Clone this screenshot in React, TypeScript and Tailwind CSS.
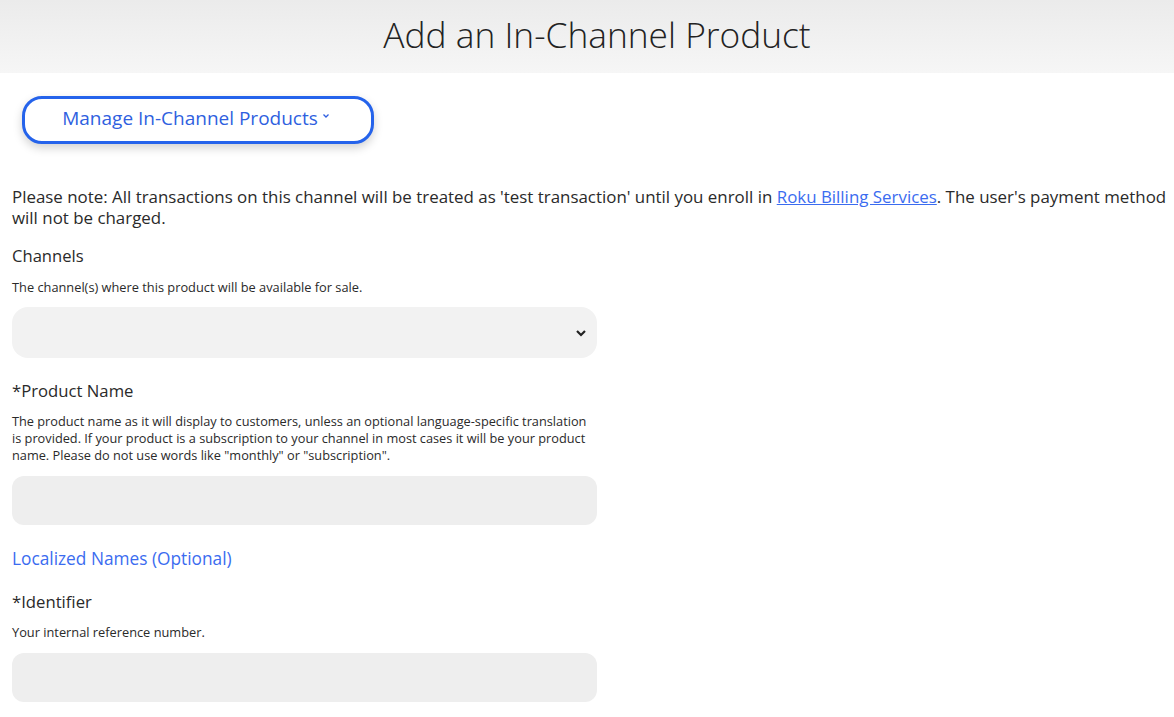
import React from "react";

export default function App() {
  const font = { fontFamily: '"Open Sans", "Liberation Sans", sans-serif' };
  return (
    <div className="min-h-[717px] bg-white text-[#2a2a2a]" style={font}>
      <header className="h-[73px] bg-gradient-to-b from-[#ebebeb] to-[#f6f6f6] flex items-center justify-center pb-[4px] pl-[20px]">
        <h1 className="text-[35.3px] font-light text-[#222] leading-none">Add an In-Channel Product</h1>
      </header>
      <div className="pl-[12px]">
        <div className="pt-[23px] pl-[10px]">
          <button className="w-[352px] h-[48px] rounded-[20px] border-[3px] border-[#2563eb] bg-white shadow-[0_4px_10px_rgba(0,0,0,0.18)] flex items-center justify-center text-[#2f5fe0] text-[19px] pb-[3px] pr-[4px]">
            Manage In-Channel Products
            <svg className="ml-[4px] mb-[6px]" width="8" height="6" viewBox="0 0 8 6"><path d="M1.5 1.5 L4 4 L6.5 1.5" fill="none" stroke="#2f5fe0" strokeWidth="1.3" /></svg>
          </button>
        </div>
        <p className="mt-[42px] text-[16.9px] leading-[21px] pr-[4px]">
          Please note: All transactions on this channel will be treated as 'test transaction' until you enroll in{" "}
          <a href="#" className="text-[#3b6cf0] underline">Roku Billing Services</a>. The user's payment method will not be charged.
        </p>
        <div className="w-[585px]">
          <div className="mt-[17px] text-[16.6px] leading-[22px]">Channels</div>
          <div className="mt-[12px] text-[12.8px] leading-[16px]">The channel(s) where this product will be available for sale.</div>
          <div className="mt-[12px] h-[51px] rounded-[16px] bg-[#f2f2f2] flex items-center justify-end pr-[10px]">
            <svg width="12" height="8" viewBox="0 0 12 8"><path d="M2 2 L6 6 L10 2" fill="none" stroke="#222" strokeWidth="2.2" /></svg>
          </div>
          <div className="mt-[22px] text-[16.7px] leading-[22px]">*Product Name</div>
          <div className="mt-[11px] text-[12.75px] leading-[17px]">
            The product name as it will display to customers, unless an optional language-specific translation is provided. If your product is a subscription to your channel in most cases it will be your product name. Please do not use words like "monthly" or "subscription".
          </div>
          <div className="mt-[12px] h-[49px] rounded-[12px] bg-[#eeeeee]"></div>
          <div className="mt-[23px] text-[17.3px] leading-[22px] text-[#3b6cf0]">Localized Names (Optional)</div>
          <div className="mt-[21px] text-[16.7px] leading-[22px]">*Identifier</div>
          <div className="mt-[11px] text-[12.8px] leading-[16px]">Your internal reference number.</div>
          <div className="mt-[13px] h-[49px] rounded-[12px] bg-[#eeeeee]"></div>
        </div>
      </div>
    </div>
  );
}
